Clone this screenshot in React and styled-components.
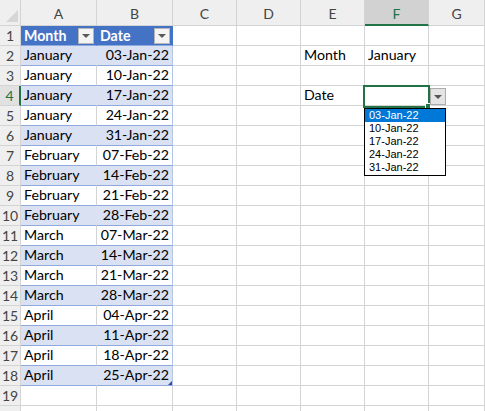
import React from "react";
import styled, { createGlobalStyle, css } from "styled-components";

const Global = createGlobalStyle`
  html, body { margin: 0; padding: 0; background: #fff; overflow: hidden; }
  body { font-family: "Lato", "Liberation Sans", sans-serif; }
`;

const GRID = "#d4d4d4";
const GREEN = "#217346";
const BLUE = "#4472c4";
const BAND = "#d9e1f2";
const BAND_LINE = "#8ea9db";

const Sheet = styled.div`
  display: grid;
  grid-template-columns: 21px 76px 76px 64px 64px 64px 64px 1fr;
  grid-template-rows: 26px repeat(20, 20px);
  width: 485px;
  height: 411px;
  overflow: hidden;
  font-family: "Lato", "Liberation Sans", sans-serif;
  font-size: 14.2px;
  color: #000;
`;

const Corner = styled.div`
  box-sizing: border-box;
  background: #efefef;
  border-right: 1px solid ${GRID};
  border-bottom: 1px solid ${GRID};
  display: flex;
  align-items: flex-end;
  justify-content: flex-end;
  padding: 0 2px 3px 0;
`;

const CornerTri = styled.div`
  width: 0;
  height: 0;
  border-left: 12px solid transparent;
  border-bottom: 12px solid #d6d6d6;
`;

const ColHeader = styled.div`
  box-sizing: border-box;
  background: ${(p) => (p.$active ? "#d2d2d2" : "#efefef")};
  color: ${(p) => (p.$active ? GREEN : "#444")};
  border-right: 1px solid ${GRID};
  border-bottom: ${(p) => (p.$active ? `2px solid ${GREEN}` : `1px solid ${GRID}`)};
  display: flex;
  align-items: center;
  justify-content: center;
  padding-top: ${(p) => (p.$active ? "2px" : "1px")};
  font-size: 14px;
`;

const RowHeader = styled.div`
  box-sizing: border-box;
  background: ${(p) => (p.$active ? "#e1e1e1" : "#efefef")};
  color: ${(p) => (p.$active ? GREEN : "#444")};
  border-right: ${(p) => (p.$active ? `2px solid ${GREEN}` : `1px solid ${GRID}`)};
  border-bottom: 1px solid ${GRID};
  display: flex;
  align-items: flex-end;
  justify-content: center;
  padding-bottom: 1px;
  font-size: 14px;
`;

const Cell = styled.div`
  position: relative;
  box-sizing: border-box;
  border-right: 1px solid ${GRID};
  border-bottom: 1px solid ${GRID};
  display: flex;
  align-items: flex-end;
  justify-content: ${(p) => (p.$right ? "flex-end" : "flex-start")};
  padding: 0 3px 1px 3px;
  white-space: nowrap;
  line-height: 18px;
  ${(p) =>
    p.$kind === "head" &&
    css`
      background: ${BLUE};
      color: #fff;
      font-weight: 700;
      border-right-color: ${BLUE};
      border-bottom-color: ${BAND_LINE};
      justify-content: space-between;
      align-items: center;
      padding: 0 2px 0 3px;
    `}
  ${(p) =>
    p.$kind === "band" &&
    css`
      background: ${BAND};
      border-bottom-color: ${BAND_LINE};
      border-right-color: ${p.$last ? "#b4c6e7" : BAND};
    `}
  ${(p) =>
    p.$kind === "plain" &&
    css`
      border-bottom-color: ${BAND_LINE};
      border-right-color: ${p.$last ? "#b4c6e7" : GRID};
    `}
`;

const HeadText = styled.span`
  padding-top: 1px;
`;

const FilterBtn = styled.div`
  box-sizing: border-box;
  width: 16px;
  height: 16px;
  background: #f4f4f4;
  border: 1px solid #b7b7b7;
  display: flex;
  align-items: center;
  justify-content: center;
  &::after {
    content: "";
    width: 0;
    height: 0;
    border-left: 4px solid transparent;
    border-right: 4px solid transparent;
    border-top: 4px solid #5a5a5a;
  }
`;

const ResizeMark = styled.div`
  position: absolute;
  right: 0;
  bottom: 0;
  width: 0;
  height: 0;
  border-left: 4px solid transparent;
  border-bottom: 4px solid #2f4f9c;
`;

const ActiveBox = styled.div`
  position: absolute;
  left: -2px;
  top: -1px;
  width: 67px;
  height: 23px;
  box-sizing: border-box;
  border: 2px solid ${GREEN};
  pointer-events: none;
  z-index: 2;
  &::after {
    content: "";
    position: absolute;
    right: -3px;
    bottom: -3px;
    width: 4px;
    height: 4px;
    background: ${GREEN};
    border: 1px solid #fff;
  }
`;

const DropBtn = styled.div`
  position: absolute;
  left: 65px;
  top: 2px;
  width: 16px;
  height: 17px;
  box-sizing: border-box;
  background: #e4e4e4;
  border: 1px solid #acacac;
  display: flex;
  align-items: center;
  justify-content: center;
  z-index: 3;
  &::after {
    content: "";
    width: 0;
    height: 0;
    border-left: 4px solid transparent;
    border-right: 4px solid transparent;
    border-top: 4px solid #555;
  }
`;

const DropList = styled.div`
  position: absolute;
  left: -1px;
  top: 22px;
  width: 82px;
  box-sizing: border-box;
  background: #fff;
  border: 1px solid #000;
  display: flex;
  flex-direction: column;
  padding-bottom: 1px;
  z-index: 4;
`;

const DropItem = styled.div`
  height: 13px;
  line-height: 13px;
  padding-left: 4px;
  overflow: hidden;
  font-family: "Liberation Sans", Arial, sans-serif;
  font-size: 11px;
  background: ${(p) => (p.$selected ? "#0078d7" : "transparent")};
  color: ${(p) => (p.$selected ? "#fff" : "#000")};
`;

const cols = ["A", "B", "C", "D", "E", "F", "G"];

const data = [
  ["January", "03-Jan-22"],
  ["January", "10-Jan-22"],
  ["January", "17-Jan-22"],
  ["January", "24-Jan-22"],
  ["January", "31-Jan-22"],
  ["February", "07-Feb-22"],
  ["February", "14-Feb-22"],
  ["February", "21-Feb-22"],
  ["February", "28-Feb-22"],
  ["March", "07-Mar-22"],
  ["March", "14-Mar-22"],
  ["March", "21-Mar-22"],
  ["March", "28-Mar-22"],
  ["April", "04-Apr-22"],
  ["April", "11-Apr-22"],
  ["April", "18-Apr-22"],
  ["April", "25-Apr-22"],
];

const listItems = ["03-Jan-22", "10-Jan-22", "17-Jan-22", "24-Jan-22", "31-Jan-22"];

export default function App() {
  const rows = [];
  for (let r = 1; r <= 20; r++) {
    const cells = [];
    cells.push(
      <RowHeader key="h" $active={r === 4}>
        {r < 20 ? r : ""}
      </RowHeader>
    );
    if (r === 1) {
      cells.push(
        <Cell key="A" $kind="head">
          <HeadText>Month</HeadText>
          <FilterBtn />
        </Cell>,
        <Cell key="B" $kind="head">
          <HeadText>Date</HeadText>
          <FilterBtn />
        </Cell>
      );
    } else if (r <= 18) {
      const d = data[r - 2];
      const kind = r % 2 === 0 ? "band" : "plain";
      cells.push(
        <Cell key="A" $kind={kind}>
          {d[0]}
        </Cell>,
        <Cell key="B" $kind={kind} $right $last>
          {d[1]}
          {r === 18 && <ResizeMark />}
        </Cell>
      );
    } else {
      cells.push(<Cell key="A" />, <Cell key="B" />);
    }
    cells.push(<Cell key="C" />, <Cell key="D" />);
    if (r === 2) {
      cells.push(<Cell key="E">Month</Cell>, <Cell key="F">January</Cell>);
    } else if (r === 4) {
      cells.push(
        <Cell key="E">Date</Cell>,
        <Cell key="F">
          <ActiveBox />
          <DropBtn />
          <DropList>
            {listItems.map((t, i) => (
              <DropItem key={t} $selected={i === 0}>
                {t}
              </DropItem>
            ))}
          </DropList>
        </Cell>
      );
    } else {
      cells.push(<Cell key="E" />, <Cell key="F" />);
    }
    cells.push(<Cell key="G" />);
    rows.push(<React.Fragment key={r}>{cells}</React.Fragment>);
  }

  return (
    <>
      <Global />
      <Sheet>
        <Corner>
          <CornerTri />
        </Corner>
        {cols.map((c) => (
          <ColHeader key={c} $active={c === "F"}>
            {c}
          </ColHeader>
        ))}
        {rows}
      </Sheet>
    </>
  );
}
